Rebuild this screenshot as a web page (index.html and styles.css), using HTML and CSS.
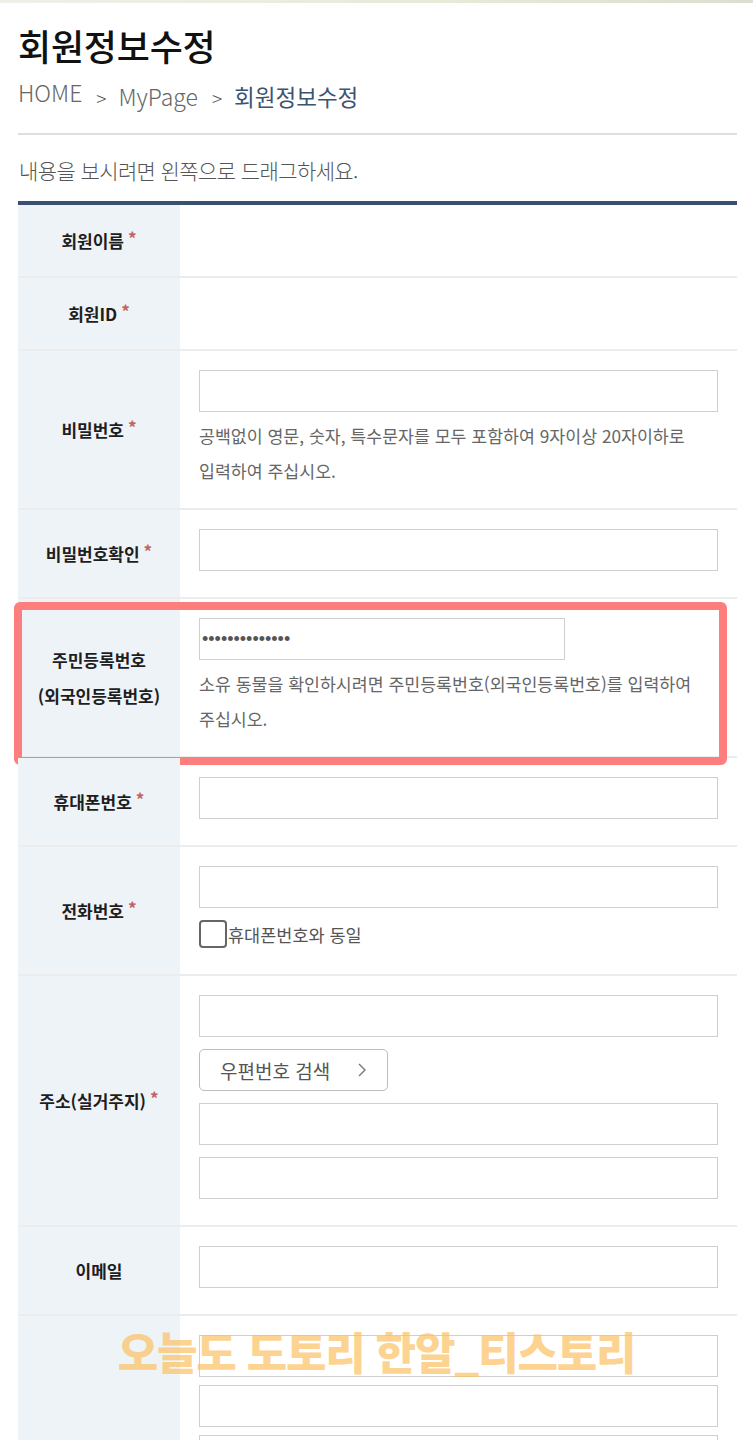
FILE: index.html
```html
<!DOCTYPE html>
<html lang="ko">

<head>
    <meta charset="UTF-8">
    <meta name="viewport" content="width=device-width, initial-scale=1.0">
    <title>회원정보수정</title>
    <link rel="stylesheet" href="styles.css">
</head>

<body>
    <div class="top-shade"></div>
    <div class="wrap">
        <header class="page-head">
            <h1 class="page-title">회원정보수정</h1>
            <nav class="breadcrumb">
                <span class="home">HOME</span>
                <span class="sep">&gt;</span>
                <span>MyPage</span>
                <span class="sep">&gt;</span>
                <span class="current">회원정보수정</span>
            </nav>
        </header>

        <p class="drag-hint">내용을 보시려면 왼쪽으로 드래그하세요.</p>

        <form class="form-table">
            <div class="row row-text">
                <div class="th">회원이름 <em>*</em></div>
                <div class="td"></div>
            </div>
            <div class="row row-text">
                <div class="th">회원ID <em>*</em></div>
                <div class="td"></div>
            </div>
            <div class="row">
                <div class="th">비밀번호 <em>*</em></div>
                <div class="td">
                    <input type="password" class="input">
                    <p class="help">공백없이 영문, 숫자, 특수문자를 모두 포함하여 9자이상 20자이하로 입력하여 주십시오.</p>
                </div>
            </div>
            <div class="row">
                <div class="th">비밀번호확인 <em>*</em></div>
                <div class="td">
                    <input type="password" class="input">
                </div>
            </div>
            <div class="row row-marked">
                <div class="th">주민등록번호<br>(외국인등록번호)</div>
                <div class="td">
                    <input type="password" class="input input-short" value="12345678901234">
                    <p class="help">소유 동물을 확인하시려면 주민등록번호(외국인등록번호)를 입력하여 주십시오.</p>
                </div>
                <!-- highlight drawn over the row -->
                <span class="mark-box"></span>
            </div>
            <div class="row">
                <div class="th">휴대폰번호 <em>*</em></div>
                <div class="td">
                    <input type="text" class="input">
                </div>
            </div>
            <div class="row">
                <div class="th">전화번호 <em>*</em></div>
                <div class="td">
                    <input type="text" class="input">
                    <label class="check">
                        <input type="checkbox">
                        <span class="check-box"></span>휴대폰번호와 동일
                    </label>
                </div>
            </div>
            <div class="row">
                <div class="th">주소(실거주지) <em>*</em></div>
                <div class="td">
                    <input type="text" class="input">
                    <button type="button" class="btn-zip">우편번호 검색
                        <svg width="12" height="16" viewBox="0 0 12 16">
                            <polyline points="3,2 9,8 3,14" fill="none" stroke="#777" stroke-width="1.4" />
                        </svg>
                    </button>
                    <input type="text" class="input">
                    <input type="text" class="input">
                </div>
            </div>
            <div class="row">
                <div class="th">이메일</div>
                <div class="td">
                    <input type="text" class="input">
                </div>
            </div>
            <div class="row">
                <div class="th"></div>
                <div class="td td-tight">
                    <input type="text" class="input">
                    <input type="text" class="input">
                    <input type="text" class="input">
                </div>
            </div>
        </form>
    </div>

    <div class="watermark">오늘도 도토리 한알_티스토리</div>
</body>

</html>
```

FILE: styles.css
```css
* {
    box-sizing: border-box;
}

body {
    margin: 0;
    font-family: "Noto Sans CJK KR", "Noto Sans", sans-serif;
    color: #222;
    background-color: #fff;
    position: relative;
}

.top-shade {
    height: 3px;
    background: linear-gradient(to right, #f0f0ea, #e9e9d8 60%, #deded0);
}

.wrap {
    padding: 0 16px 0 18px;
}

/* page heading */
.page-head {
    border-bottom: 2px solid #dedede;
    padding-bottom: 20px;
}

.page-title {
    margin: 0;
    padding-top: 21px;
    font-size: 36px;
    line-height: 42px;
    font-weight: 500;
    letter-spacing: -0.2px;
    color: #111;
}

.breadcrumb {
    margin-top: 15px;
    font-size: 23px;
    line-height: 30px;
    font-weight: 300;
    color: #666;
    display: flex;
    align-items: baseline;
}

.breadcrumb .home {
    position: relative;
    top: -4px;
}

.breadcrumb .sep {
    font-size: 19px;
    margin: 0 12px 0 14px;
    color: #555;
}

.breadcrumb .current {
    color: #3b5472;
    font-size: 22.5px;
    font-weight: 400;
}

.drag-hint {
    margin: 0;
    padding: 22px 0 18px 1px;
    font-size: 21px;
    line-height: 26px;
    font-weight: 300;
    letter-spacing: -0.6px;
    color: #555;
}

/* form table */
.form-table {
    border-top: 4px solid #3a5070;
}

.row {
    position: relative;
    display: grid;
    grid-template-columns: 162px 1fr;
    border-bottom: 2px solid #ececec;
}

.row-text {
    min-height: 73px;
}

.th {
    background-color: #eef3f7;
    display: flex;
    align-items: center;
    justify-content: center;
    text-align: center;
    font-size: 17px;
    line-height: 36px;
    font-weight: 700;
    color: #1e1e1e;
}

.th em {
    font-style: normal;
    color: #c26262;
    margin-left: 4px;
    position: relative;
    top: -3px;
}

.td {
    display: flex;
    flex-direction: column;
    align-items: flex-start;
    gap: 12px;
    padding: 19px 19px 26px;
}

.td-tight {
    gap: 8px;
}

.input {
    appearance: none;
    display: block;
    width: 100%;
    height: 42px;
    margin: 0;
    border: 1px solid #cfcfcf;
    border-radius: 0;
    background-color: #fff;
    padding: 0 2px;
    font-size: 18px;
    color: #555;
}

.input-short {
    width: 366px;
}

.help {
    margin: -6px 0 -6px;
    font-size: 17.3px;
    line-height: 35px;
    color: #666;
    word-break: keep-all;
}

.check {
    display: flex;
    align-items: center;
    height: 28px;
    font-size: 17.5px;
    color: #555;
}

.check input {
    display: none;
}

.check-box {
    width: 28px;
    height: 28px;
    border: 2px solid #666;
    border-radius: 4px;
    margin-right: 1px;
}

.btn-zip {
    display: flex;
    align-items: center;
    height: 42px;
    width: 189px;
    padding: 0 19px 0 20px;
    justify-content: space-between;
    border: 1px solid #bcbcbc;
    border-radius: 5px;
    background-color: #fff;
    font-family: inherit;
    font-size: 19px;
    color: #555;
}

/* red highlight around the resident number row */
.mark-box {
    position: absolute;
    left: -4px;
    top: 3px;
    width: 713px;
    height: 163px;
    border: 8px solid #fe7d7d;
    border-radius: 6px;
}

.watermark {
    position: absolute;
    top: 1319px;
    left: 0;
    right: 0;
    text-align: center;
    font-size: 44px;
    font-weight: 900;
    letter-spacing: -1.2px;
    color: rgba(252, 192, 96, 0.7);
    pointer-events: none;
}
```
